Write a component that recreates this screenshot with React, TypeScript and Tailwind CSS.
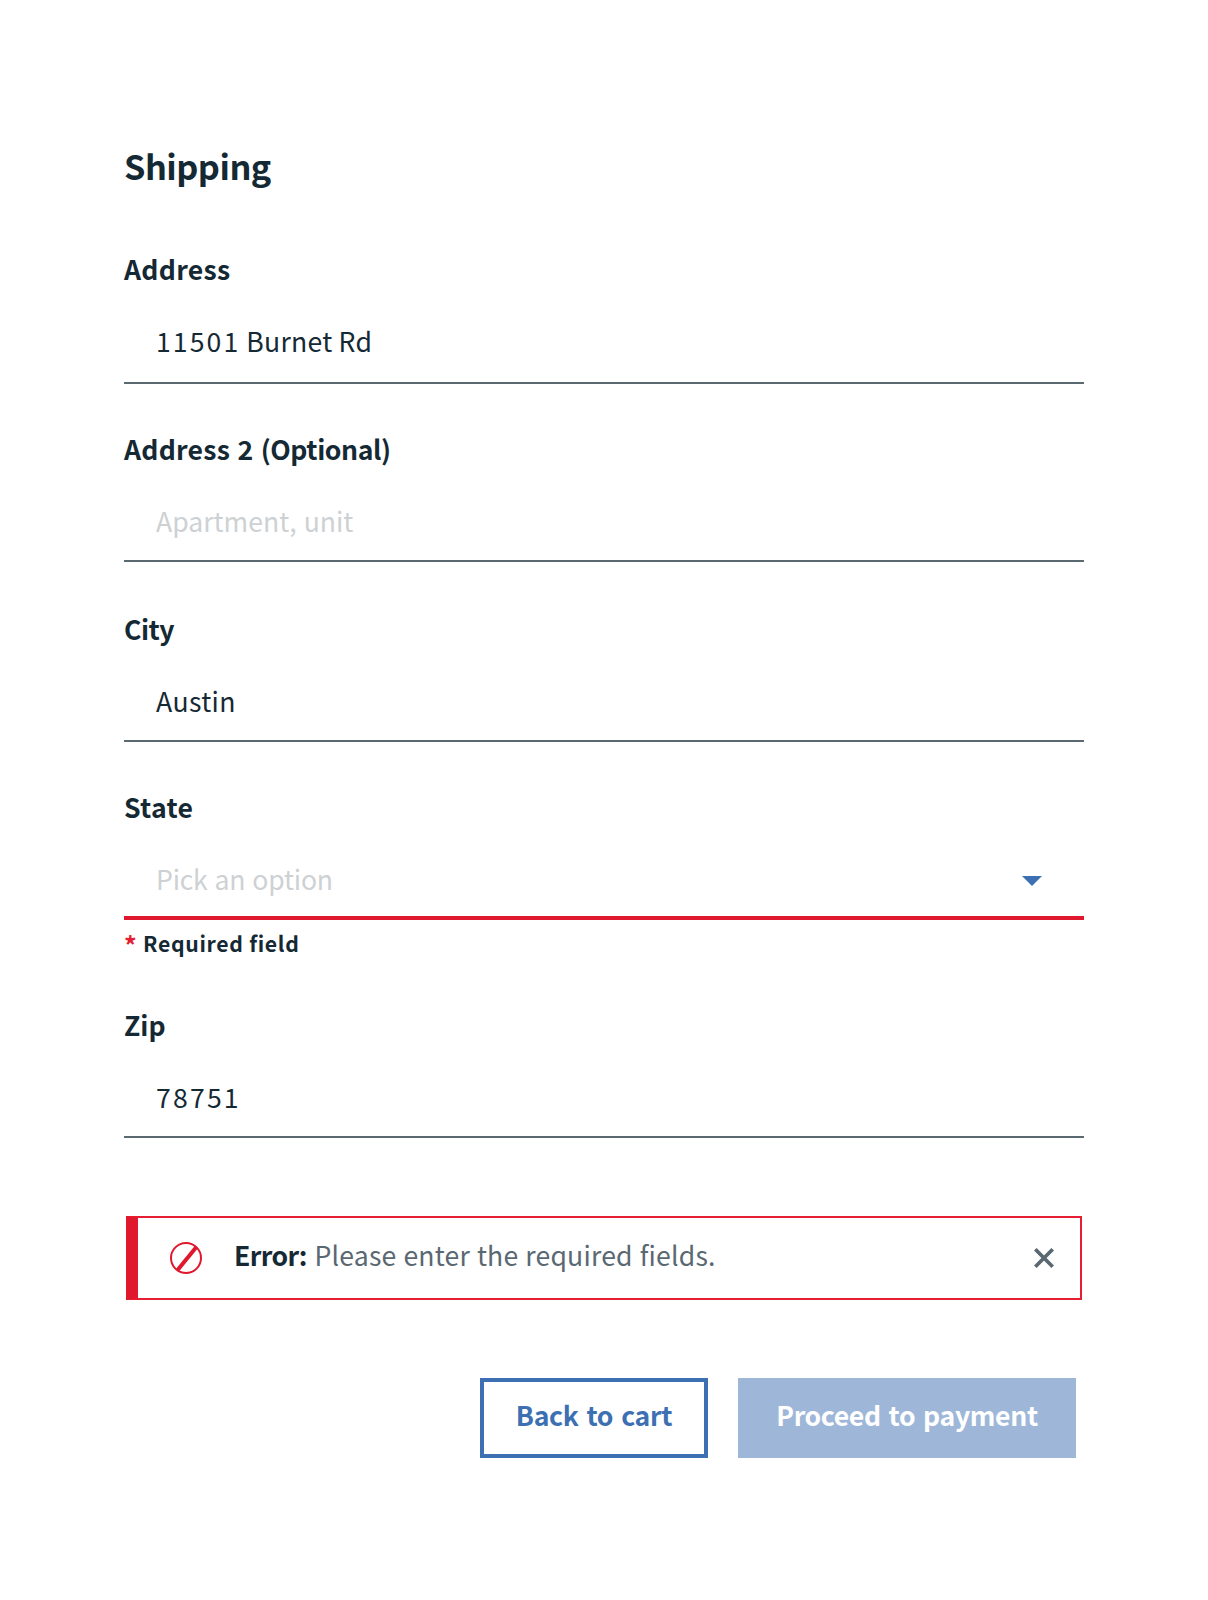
import type { ReactNode } from 'react';

type FieldProps = {
  label: ReactNode;
  labelClass?: string;
  value: ReactNode;
  valueClass?: string;
  boxClass: string;
  icon?: ReactNode;
};

function Field({ label, labelClass = '', value, valueClass = '', boxClass, icon }: FieldProps) {
  return (
    <div>
      <div className={`h-10 text-[26.6px] leading-[42px] font-semibold ${labelClass}`}>{label}</div>
      <div className={`mt-8 flex items-start justify-between border-solid pl-8 ${boxClass}`}>
        <span className={`text-[26.6px] leading-[42px] ${valueClass}`}>{value}</span>
        {icon}
      </div>
    </div>
  );
}

export default function App() {
  return (
    <main className="min-h-[1600px] w-[1208px] bg-white px-[124px] pt-[140px] font-['Noto_Sans_CJK_SC',sans-serif] whitespace-nowrap text-[#152934]">
      <h1 className="h-[50px] text-[34.3px] leading-[50px] font-semibold tracking-[-0.5px]">Shipping</h1>

      <form className="mt-[58px]">
        <Field
          label="Address"
          labelClass="tracking-[0.3px]"
          value={
            <>
              <span className="tracking-[2.1px]">11501</span> <span className="tracking-[0.25px]">Burnet Rd</span>
            </>
          }
          boxClass="h-[64px] border-b-2 border-[#5a6872]"
        />
        <div className="mt-11">
          <Field
            label={
              <>
                <span className="tracking-[0.25px] [word-spacing:1px]">Address 2 </span>
                <span className="tracking-[-0.4px]">(Optional)</span>
              </>
            }
            value="Apartment, unit"
            valueClass="text-[#cdd1d4] [word-spacing:1px]"
            boxClass="h-[62px] border-b-2 border-[#5a6872]"
          />
        </div>
        <div className="mt-[46px]">
          <Field label="City" labelClass="tracking-[-0.5px]" value="Austin" valueClass="tracking-[0.4px]" boxClass="h-[62px] border-b-2 border-[#5a6872]" />
        </div>
        <div className="mt-11">
          <Field
            label="State"
            labelClass="tracking-[0.3px]"
            value="Pick an option"
            valueClass="text-[#cdd1d4] tracking-[-0.2px] [word-spacing:1.2px]"
            boxClass="h-[62px] border-b-4 border-[#e0182d]"
            icon={
              <svg className="mt-[18px] mr-[42px] h-[10px] w-5" viewBox="0 0 20 10" fill="#3d70b2">
                <path d="M0 0h20L10 10z" />
              </svg>
            }
          />
          <p className="mt-[7px] flex h-[33px] text-[21.2px] leading-8 font-semibold tracking-[0.7px]">
            <span className="w-[19px] text-[25px] leading-[34px] text-[#e71d32]">*</span>
            <span>Required field</span>
          </p>
        </div>
        <div className="mt-11">
          <Field label="Zip" value="78751" valueClass="tracking-[2.2px]" boxClass="h-[62px] border-b-2 border-[#5a6872]" />
        </div>
      </form>

      <div className="mx-[2px] mt-[78px] flex h-[84px] items-center border-2 border-l-[12px] border-[#e71d32] border-l-[#e0182d] text-[26.6px]">
        <svg className="ml-8 size-8 shrink-0" viewBox="0 0 32 32" fill="none" stroke="#e0182d">
          <circle cx="16" cy="16" r="15" strokeWidth="2" />
          <path d="M7.6 28 26.4 5" strokeWidth="4" />
        </svg>
        <p className="-mt-[6px] ml-8 flex h-10 leading-10">
          <strong className="w-[80.5px] font-semibold tracking-[-0.6px]">Error:</strong>
          <span className="tracking-[0.2px] text-[#5a6872] [word-spacing:0.7px]">Please enter the required fields.</span>
        </p>
        <svg className="mr-[26px] ml-auto size-5" viewBox="0 0 20 20" stroke="#5a6872" strokeWidth="3.7">
          <path d="m1.3 1.3 17.4 17.4m0-17.4-17.4 17.4" />
        </svg>
      </div>

      <div className="mt-[78px] ml-[356px] flex h-20 gap-[30px] text-[26.6px] leading-10 font-semibold">
        <button type="button" className="w-[228px] border-4 border-[#3d70b2] pb-[6px] tracking-[-0.3px] text-[#3d70b2] [word-spacing:2.2px]">
          Back to cart
        </button>
        <button type="button" className="w-[338px] bg-[#9eb7d9] pb-[6px] tracking-[-0.35px] text-white [word-spacing:2.2px]">
          Proceed to payment
        </button>
      </div>
    </main>
  );
}
